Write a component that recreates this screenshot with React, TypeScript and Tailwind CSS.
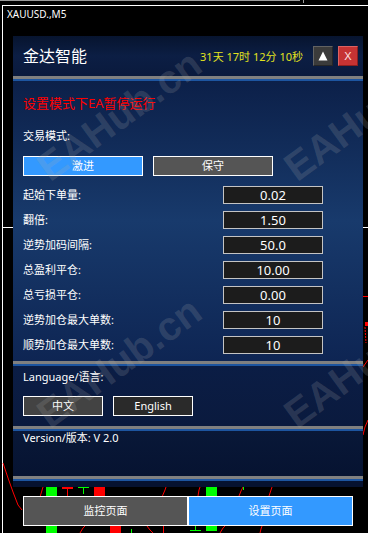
import React from "react";

const rows: { label: string; value: string }[] = [
  { label: "起始下单量:", value: "0.02" },
  { label: "翻倍:", value: "1.50" },
  { label: "逆势加码间隔:", value: "50.0" },
  { label: "总盈利平仓:", value: "10.00" },
  { label: "总亏损平仓:", value: "0.00" },
  { label: "逆势加仓最大单数:", value: "10" },
  { label: "顺势加仓最大单数:", value: "10" },
];

function Separator() {
  return (
    <div className="flex flex-col">
      <div className="h-[3px] bg-[#808080]" />
      <div className="h-[2px] bg-[#1d55a0]" />
    </div>
  );
}

function Chart() {
  return (
    <svg className="absolute inset-0" width="368" height="533" viewBox="0 0 368 533">
      <line x1="0" y1="0.5" x2="300" y2="0.5" stroke="#9a9a9a" />
      <line x1="303.5" y1="0" x2="303.5" y2="3" stroke="#9a9a9a" />
      <line x1="2" y1="5.5" x2="368" y2="5.5" stroke="#ffffff" />
      <line x1="2.5" y1="5" x2="2.5" y2="533" stroke="#ffffff" />
      <line x1="2" y1="227.5" x2="13" y2="227.5" stroke="#ffffff" />
      <line x1="363" y1="227.5" x2="368" y2="227.5" stroke="#ffffff" />
      <line x1="363" y1="296.5" x2="368" y2="296.5" stroke="#ff0000" />
      <rect x="365" y="322" width="3" height="4" fill="#ff0000" />
      <polyline points="365,327 365.5,335 366,343" stroke="#ff0000" fill="none" strokeDasharray="2 1" />
      <polyline points="363,367 368,360" stroke="#ff0000" fill="none" />
      <polyline points="363,435 365,427 368,420" stroke="#ff0000" fill="none" />
      <polyline points="3,463 8,478 13,492 18,505 22,510" stroke="#ff0000" fill="none" />
      {/* candles */}
      <rect x="46" y="480" width="11" height="53" fill="#00ff00" />
      <rect x="62" y="487" width="11" height="2" fill="#ff0000" />
      <rect x="67" y="489" width="1" height="8" fill="#ff0000" />
      <rect x="78" y="487" width="11" height="1" fill="#00ff00" />
      <rect x="83" y="487" width="1" height="7" fill="#00ff00" />
      <rect x="94" y="480" width="11" height="17" fill="#ff0000" />
      <polyline points="40,497 41.5,492 43,487" stroke="#ff0000" fill="none" />
      <rect x="110" y="526" width="11" height="7" fill="#ff0000" />
      <polyline points="80,533 83,528 85,526" stroke="#ff0000" fill="none" />
      <rect x="131" y="529" width="1" height="4" fill="#00ff00" />
      <polyline points="147,526 150,530 153,533" stroke="#ff0000" fill="none" />
      <line x1="163.5" y1="526" x2="163.5" y2="533" stroke="#ff0000" />
      <polyline points="162,497 165,490 166,487" stroke="#ff0000" fill="none" />
      <polyline points="198,496 199,490 200,487" stroke="#ff0000" fill="none" />
      <rect x="206" y="480" width="11" height="51" fill="#00ff00" />
      <rect x="190" y="530" width="11" height="1" fill="#00ff00" />
      <rect x="195" y="526" width="1" height="4" fill="#00ff00" />
      <polyline points="239,496 241,491 243,487" stroke="#ff0000" fill="none" />
      <rect x="243" y="487" width="1" height="3" fill="#00ff00" />
      <polyline points="269,496 271,490 272,487" stroke="#ff0000" fill="none" />
      <polyline points="220,533 223,528 225,526" stroke="#ff0000" fill="none" />
      <polyline points="260,533 261,529 262,526" stroke="#ff0000" fill="none" />
    </svg>
  );
}

export default function App() {
  return (
    <div className="relative w-[368px] h-[533px] bg-black overflow-hidden font-['Noto_Sans','Noto_Sans_CJK_SC',sans-serif] text-white">
      <Chart />
      <div className="relative flex flex-col">
        <div className="h-[36px] pt-[8px] pl-[7px] text-[10px] leading-[12px] text-white">XAUUSD.,M5</div>

        <div className="ml-[13px] w-[350px] h-[451px] flex flex-col">
          {/* header */}
          <div className="h-[40px] flex items-center pl-[10px] pr-[5px] bg-gradient-to-b from-[#07142f] via-[#0c1e44] to-[#0a1a3d]">
            <div className="flex-1 text-[16px] leading-[20px] text-white">金达智能</div>
            <div className="text-[11px] leading-[14px] text-[#e2e21e] mr-[10px] mt-[1px]">31天 17时 12分 10秒</div>
            <div className="w-[20px] h-[20px] flex items-center justify-center bg-[#3b3b3b] border border-t-[#626262] border-l-[#626262] border-b-[#262626] border-r-[#262626] mr-[5px]">
              <svg width="10" height="10" viewBox="0 0 10 10">
                <polygon points="5,0.5 9.5,9.5 0.5,9.5" fill="#ffffff" />
              </svg>
            </div>
            <div className="w-[20px] h-[20px] flex items-center justify-center bg-[#c63333] border border-t-[#dd6262] border-l-[#dd6262] border-b-[#8c1f1f] border-r-[#8c1f1f] text-[11px] leading-[12px] text-[#ffe0e0] font-['Liberation_Sans',sans-serif]">
              X
            </div>
          </div>
          <Separator />

          {/* settings */}
          <div className="h-[280px] flex flex-col pt-[13px] bg-gradient-to-b from-[#0c2049] via-[#183a6c] to-[#0e2553]">
            <div className="pl-[10px] h-[18px] text-[13px] leading-[18px] text-[#ff0000]">设置模式下EA暂停运行</div>
            <div className="pl-[10px] mt-[16px] h-[16px] text-[11px] leading-[16px]">交易模式:</div>
            <div className="pl-[10px] mt-[12px] flex gap-[10px]">
              <div className="w-[120px] h-[20px] flex items-center justify-center bg-[#3399ff] border border-white text-[11px] leading-[14px]">激进</div>
              <div className="w-[120px] h-[20px] flex items-center justify-center bg-[#555555] border border-white text-[11px] leading-[14px]">保守</div>
            </div>
            <div className="mt-[10px] flex flex-col gap-[7px]">
              {rows.map((r) => (
                <div key={r.label} className="flex items-center h-[18px] pl-[10px] pr-[40px]">
                  <div className="flex-1 text-[11px] leading-[14px]">{r.label}</div>
                  <div className="w-[100px] h-[18px] flex items-center justify-center bg-[#1c1c1c] border border-[#c4c4c4] text-[13px] leading-[16px]">
                    {r.value}
                  </div>
                </div>
              ))}
            </div>
          </div>
          <Separator />

          {/* language */}
          <div className="h-[60px] flex flex-col pt-[3px] bg-gradient-to-b from-[#0b1d45] to-[#0a1a3e]">
            <div className="pl-[10px] h-[16px] text-[11px] leading-[16px]">Language/语言:</div>
            <div className="pl-[10px] mt-[11px] flex gap-[10px]">
              <div className="w-[80px] h-[20px] flex items-center justify-center bg-[#434343] border border-white text-[11px] leading-[14px]">中文</div>
              <div className="w-[80px] h-[20px] flex items-center justify-center bg-[#2a2a2a] border border-white text-[11px] leading-[14px]">English</div>
            </div>
          </div>
          <Separator />

          {/* version */}
          <div className="h-[45px] bg-gradient-to-b from-[#091838] to-[#061331]">
            <div className="pl-[10px] h-[13px] text-[11px] leading-[13px]">Version/版本: V 2.0</div>
          </div>
          <Separator />
          <div className="h-[6px] bg-[#061230]" />
        </div>

        <div className="ml-[23px] mt-[9px] flex">
          <div className="w-[165px] h-[30px] flex items-center justify-center bg-[#555555] border border-white text-[11px] leading-[14px]">监控页面</div>
          <div className="w-[165px] h-[30px] flex items-center justify-center bg-[#3399ff] border border-white text-[11px] leading-[14px]">设置页面</div>
        </div>
      </div>

      {/* watermarks */}
      <div className="pointer-events-none absolute left-[119px] top-[115px] -translate-x-1/2 -translate-y-1/2 -rotate-[36deg] whitespace-nowrap text-[40px] leading-[46px] font-bold text-[rgba(170,170,170,0.2)] font-['Liberation_Sans',sans-serif]">EAHub.cn</div>
      <div className="pointer-events-none absolute left-[366px] top-[115px] -translate-x-1/2 -translate-y-1/2 -rotate-[36deg] whitespace-nowrap text-[40px] leading-[46px] font-bold text-[rgba(170,170,170,0.2)] font-['Liberation_Sans',sans-serif]">EAHub.cn</div>
      <div className="pointer-events-none absolute left-[119px] top-[362px] -translate-x-1/2 -translate-y-1/2 -rotate-[36deg] whitespace-nowrap text-[40px] leading-[46px] font-bold text-[rgba(170,170,170,0.2)] font-['Liberation_Sans',sans-serif]">EAHub.cn</div>
      <div className="pointer-events-none absolute left-[366px] top-[362px] -translate-x-1/2 -translate-y-1/2 -rotate-[36deg] whitespace-nowrap text-[40px] leading-[46px] font-bold text-[rgba(170,170,170,0.2)] font-['Liberation_Sans',sans-serif]">EAHub.cn</div>
    </div>
  );
}
